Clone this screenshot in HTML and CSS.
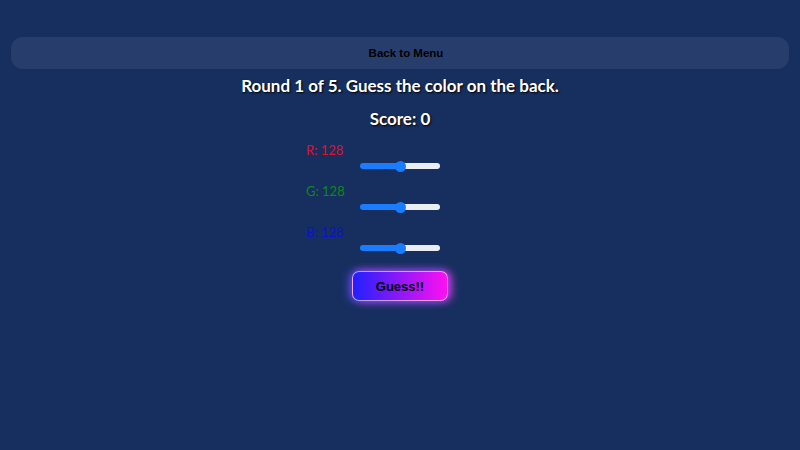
FILE: index.html
```html
<!DOCTYPE html>
<html lang="en">
<head>
    <meta charset="UTF-8">
    <meta name="viewport" content="width=device-width, initial-scale=1.0">
    <title>Guess the Color</title>
    <link rel="stylesheet" href="styles.css">
</head>
<body>
    <div class="game">
        <button class="menu-btn">Back to Menu</button>
        <h2 class="round">Round 1 of 5. Guess the color on the back.</h2>
        <h3 class="score">Score: 0</h3>
        <div class="sliders">
            <div class="slider-row">
                <label class="label red">R: 128</label>
                <input class="slider" type="range" min="0" max="255" value="128" style="--fill: 50%">
            </div>
            <div class="slider-row">
                <label class="label green">G: 128</label>
                <input class="slider" type="range" min="0" max="255" value="128" style="--fill: 50%">
            </div>
            <div class="slider-row">
                <label class="label blue">B: 128</label>
                <input class="slider" type="range" min="0" max="255" value="128" style="--fill: 50%">
            </div>
        </div>
        <button class="guess-btn">Guess!!</button>
    </div>
</body>
</html>
```

FILE: styles.css
```css
* {
    box-sizing: border-box;
    margin: 0;
    padding: 0;
}
body {
    font-family: "Comic Sans MS", Lato, sans-serif;
    background-color: #172f5f;
    padding: 37px 11px;
}
.game {
    display: flex;
    flex-direction: column;
    align-items: center;
}
.menu-btn {
    width: 100%;
    height: 32px;
    padding-left: 12px;
    border: none;
    border-radius: 12px;
    background-color: #273d6c;
    font-family: "Liberation Sans", Arial, sans-serif;
    font-size: 11.5px;
    font-weight: bold;
    color: #000;
}
.round {
    margin-top: 7px;
    font-size: 17px;
    line-height: 20px;
    color: #fff;
    text-shadow: 1px 1px 2px #000;
}
.score {
    margin-top: 13px;
    font-size: 17px;
    line-height: 20px;
    color: #fff;
    text-shadow: 1px 1px 2px #000;
}
.sliders {
    width: 188px;
    margin-top: 13px;
    display: flex;
    flex-direction: column;
    gap: 9px;
}
.slider-row {
    display: flex;
    flex-direction: column;
    align-items: center;
}
.label {
    align-self: flex-start;
    font-size: 13px;
    line-height: 16px;
}
.red { color: #e0102a; }
.green { color: #0a8a1a; }
.blue { color: #0a10d8; }
.slider {
    -webkit-appearance: none;
    appearance: none;
    width: 80px;
    height: 16px;
    background: transparent;
}
.slider::-webkit-slider-runnable-track {
    height: 6px;
    border-radius: 3px;
    background: linear-gradient(90deg, #1a7cff var(--fill), #eaedf2 var(--fill));
}
.slider::-webkit-slider-thumb {
    -webkit-appearance: none;
    width: 11px;
    height: 11px;
    margin-top: -2.5px;
    border-radius: 50%;
    background: #1a7cff;
}
.guess-btn {
    margin-top: 15px;
    width: 96px;
    height: 30px;
    border: 1px solid rgba(255, 255, 255, 0.6);
    border-radius: 7px;
    background: linear-gradient(90deg, #2020ff, #ff10f0);
    box-shadow: -3px 0 8px rgba(80, 80, 255, 0.8), 3px 0 8px rgba(255, 64, 255, 0.9);
    font-family: "Liberation Sans", Arial, sans-serif;
    font-size: 13px;
    font-weight: bold;
    color: #000;
}
```
